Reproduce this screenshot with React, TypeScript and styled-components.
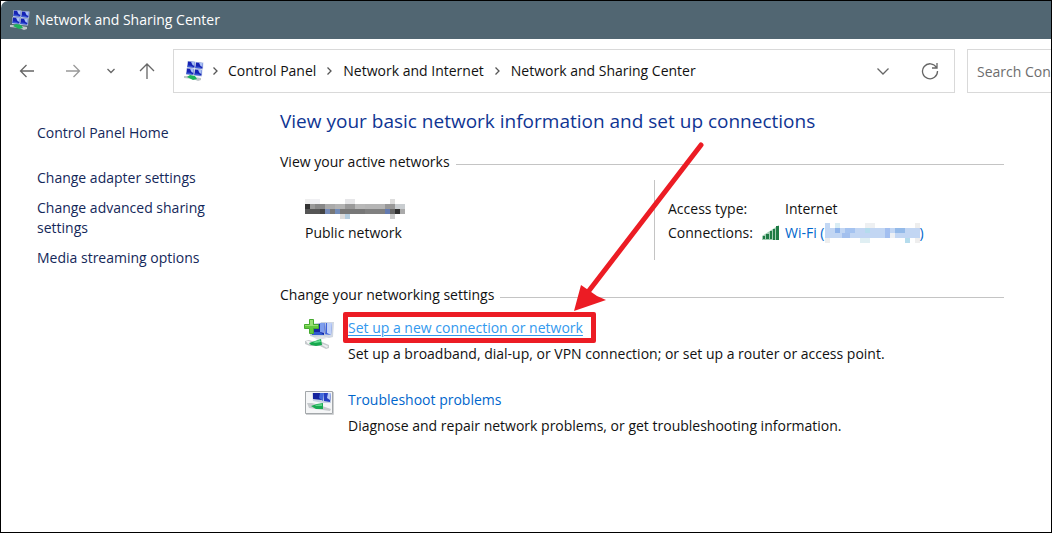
import React from "react";
import styled, { createGlobalStyle } from "styled-components";

const Global = createGlobalStyle`
  *, *::before, *::after { box-sizing: border-box; }
  body { margin: 0; background: #fff; }
  body, button, input { font: 14px/20px "Open Sans", "Noto Sans", sans-serif; }
`;

const Window = styled.div`
  min-height: 100vh;
  border: 1px solid #000;
  background: #fff;
  color: #111;
  overflow: hidden;
`;

const TitleBar = styled.header`
  display: flex;
  align-items: center;
  gap: 5px;
  height: 38px;
  padding-left: 9px;
  background: #516672;
  color: #fff;
  border-top-left-radius: 7px;
`;

const NavBar = styled.div`
  display: flex;
  align-items: center;
  padding: 10px 0 8px 14px;
`;

const NavButtons = styled.div`
  display: flex;
  align-items: center;
  width: 158px;
`;

const IconButton = styled.button<{ $width?: number }>`
  display: flex;
  align-items: center;
  justify-content: center;
  width: ${(p) => p.$width ?? 24}px;
  height: 28px;
  padding: 0;
  border: 0;
  background: none;
`;

const Spacer = styled.span<{ $size: number }>`
  flex: 0 0 ${(p) => p.$size}px;
`;

const AddressBar = styled.nav`
  display: flex;
  align-items: center;
  flex: 1;
  min-width: 0;
  height: 44px;
  padding: 0 12px 0 10px;
  border: 1px solid #d9d9d9;
`;

const Crumb = styled.a`
  color: #111;
  text-decoration: none;
  white-space: nowrap;
`;

const AddressTools = styled.div`
  display: flex;
  gap: 23px;
  margin-left: auto;
`;

const Search = styled.input`
  width: 84px;
  height: 44px;
  margin-left: 12px;
  padding: 0 0 0 9px;
  border: 1px solid #d9d9d9;
  border-right: 0;
  border-radius: 0;
  outline: 0;
  &::placeholder { color: #6d6d6d; opacity: 1; }
`;

const Body = styled.div`
  display: flex;
  padding: 0 47px 0 36px;
`;

const Sidebar = styled.nav`
  display: flex;
  flex-direction: column;
  gap: 10px;
  flex: 0 0 243px;
  padding: 22px 48px 0 0;
`;

const SideLink = styled.a<{ $home?: boolean }>`
  color: #14285a;
  text-decoration: none;
  margin-bottom: ${(p) => (p.$home ? 15 : 0)}px;
`;

const Main = styled.main`
  flex: 1;
  min-width: 0;
`;

const Heading = styled.h1`
  margin: 6px 0 0;
  color: #0f3593;
  font-size: 19px;
  line-height: 28px;
  font-weight: 400;
`;

const SectionTitle = styled.h2`
  display: flex;
  align-items: center;
  gap: 6px;
  margin: 17px 0 0;
  font: inherit;
  &::after {
    content: "";
    flex: 1;
    height: 1px;
    margin-top: 4px;
    background: #c4c4c4;
  }
`;

const ActiveNetwork = styled.div`
  display: grid;
  grid-template-columns: 374px 1fr;
  min-height: 80px;
  margin: 8px 0 25px;
`;

const NetworkName = styled.div`
  display: flex;
  flex-direction: column;
  gap: 4px;
  padding: 19px 0 0 25px;
`;

const NameRow = styled.div`
  display: flex;
  align-items: center;
  height: 20px;
`;

const Details = styled.dl`
  display: grid;
  grid-template-columns: 94px 1fr;
  align-content: start;
  row-gap: 4px;
  margin: 0;
  padding: 19px 0 0 13px;
  border-left: 1px solid #c4c4c4;
`;

const Term = styled.dt`
  margin: 0;
`;

const Value = styled.dd<{ $icon?: boolean }>`
  display: flex;
  align-items: center;
  gap: 5px;
  margin: 0;
  padding-left: ${(p) => (p.$icon ? 0 : 23)}px;
`;

const Link = styled.a<{ $hot?: boolean }>`
  color: ${(p) => (p.$hot ? "#3399ee" : "#0066cc")};
  text-decoration: ${(p) => (p.$hot ? "underline" : "none")};
  text-underline-offset: 2px;
  white-space: nowrap;
`;

const WifiLink = styled(Link)`
  display: flex;
  align-items: center;
`;

const Tasks = styled.ul`
  display: flex;
  flex-direction: column;
  gap: 26px;
  margin: 13px 0 0;
  padding: 0 0 0 24px;
  list-style: none;
`;

const Task = styled.li`
  display: grid;
  grid-template-columns: 44px 1fr;
`;

const TaskText = styled.p`
  margin: 6px 0 0;
`;

const Marked = styled.span`
  position: relative;
  &::before {
    content: "";
    position: absolute;
    inset: -6px -13px -6px -5px;
    border: 5px solid #ec1c24;
    border-radius: 2px;
    pointer-events: none;
  }
`;

const Arrow = styled.svg`
  position: absolute;
  left: 222px;
  top: -178px;
  pointer-events: none;
`;

function Monitor({ x, y }: { x: number; y: number }) {
  return (
    <g transform={`translate(${x} ${y})`}>
      <path d="M.5 0 8.500.5 8 7.500 0 7Z" fill="#c3cfe6" />
      <path d="M1 .5 7.800 1 7.400 6.500 .5 6Z" fill="#1522b4" />
      <path d="M4 .7 7.800 1 7.500 5 5.500 4Z" fill="#a9c0f4" />
      <path d="M.5 4.500 4 4.800 7.400 6.500 .5 6Z" fill="#3a5ad6" />
    </g>
  );
}

function NetworkIcon() {
  return (
    <svg width="20" height="20" viewBox="0 0 20 20" aria-hidden="true">
      <Monitor x={3} y={0} />
      <Monitor x={11} y={1} />
      <Monitor x={2} y={7} />
      <Monitor x={10} y={8} />
      <path d="M0 15 5 15 17 17 17 19 14 20 9 18 0 17Z" fill="#bfc6c8" />
      <path d="m3 16 3-2 5 1 2 3-4 1Z" fill="#1db45b" />
    </svg>
  );
}

function Cable() {
  return (
    <g>
      <path d="M1 23 5 22 11 24 18 24 25 27 25 30 22 31 16 28 6 28 1 26Z" fill="#c6cacd" />
      <path d="M2 23 5 23 9 25 4 26Z" fill="#f5f6f7" />
      <path d="m19 26 5 2-1 2-5-3Z" fill="#eceef0" />
      <path d="m5 25 6-2 6-2 1 6-6 1-5-1Z" fill="#16a94e" />
      <path d="m9 24 7-2 1 2-6 1Z" fill="#66dc92" />
    </g>
  );
}

function NewConnectionIcon() {
  return (
    <svg width="31" height="32" viewBox="0 0 31 32" aria-hidden="true">
      <path d="m17 4 13 0-1 15-4 1-9-2Z" fill="#d0d7e2" />
      <path d="m19 5 9 0-1 12-8-1Z" fill="#3d62da" />
      <path d="m23 5 5 0-1 12-4-2Z" fill="#c0d1f8" />
      <path d="m6 6 16-2-1 14-8 2-7-2Z" fill="#c5cfdd" />
      <path d="m7 7 14-2-1 12-12 0Z" fill="#1424a4" />
      <path d="m16 5 5 0-1 10-4-1Z" fill="#7d9ded" />
      <path d="m8 14 8 0 4 3-12 0Z" fill="#3159cf" />
      <path d="M9 19 19 18 23 20 14 22Z" fill="#dfe2e6" />
      <Cable />
      <path d="M5.500 1.500h4v5h5v4h-5v5h-4v-5h-5v-4h5Z" fill="#62c93e" stroke="#46aa30" />
      <path d="M6 2h3v5h5v1H1V7h5Z" fill="#98df72" />
    </svg>
  );
}

function TroubleshootIcon() {
  return (
    <svg width="31" height="26" viewBox="0 0 31 26" aria-hidden="true">
      <path d="M1.500 1.500h27v22h-27Z" fill="#f5f6f7" stroke="#a3a7aa" />
      <path d="M2 24.500h27.500V2" fill="none" stroke="#cfd1d3" />
      <path d="m8 3 19 0 0 10-8 0-10-2Z" fill="#c8d2e3" />
      <path d="m9 3 10 0-1 7-9-1Z" fill="#14239e" />
      <path d="m16 3 4 0-1 8-4-3Z" fill="#4168da" />
      <path d="m20 3 7 0-1 9-6-1Z" fill="#253fc0" />
      <path d="m24 3 3 0-1 7-3-2Z" fill="#b8caf5" />
      <path d="M3 13 8 13 15 15 27 19 26 21 19 20 5 18Z" fill="#c6cacd" />
      <path d="m7 16 6-2 6-1 0 6-7 0Z" fill="#19ab52" />
      <path d="m11 15 7-1 0 2-6 0Z" fill="#61d68c" />
    </svg>
  );
}

function SignalIcon() {
  return (
    <svg width="18" height="16" viewBox="0 0 18 16" aria-hidden="true">
      <path d="M0 11 17 0v15H0Z" fill="#a4ceb4" />
      <path d="M1 11h2v3H1Zm3-2h3v5H4Zm4-3h2v8H8Zm3-2h2v11h-2Zm3-3h3v14h-3Z" fill="#1e7b45" />
    </svg>
  );
}

type Block = [number, number, number, number, string];

function Mosaic({ width, blocks, label }: { width: number; blocks: Block[]; label: string }) {
  return (
    <svg width={width} height="20" viewBox={`0 0 ${width} 20`} role="img" aria-label={label} shapeRendering="crispEdges">
      {blocks.map(([x, y, w, h, fill], i) => (
        <rect key={i} x={x} y={y} width={w} height={h} fill={fill} />
      ))}
    </svg>
  );
}

const nameBlocks: Block[] = [
  [0, 0, 5, 5, "#eee"], [5, 0, 10, 5, "#f0f0f3"], [40, 0, 10, 5, "#e6e6e8"], [85, 0, 5, 5, "#ddd"],
  [0, 5, 5, 5, "#333"], [5, 5, 5, 5, "#999"], [10, 5, 10, 5, "#888"], [20, 5, 10, 5, "#aaa"], [30, 5, 10, 5, "#b3b3b3"], [40, 5, 10, 5, "#999"], [50, 5, 10, 5, "#b8b8b8"], [60, 5, 20, 5, "#b5b5b5"], [80, 5, 10, 5, "#989898"], [90, 5, 10, 5, "#c9cdd0"],
  [0, 10, 15, 5, "#555"], [15, 10, 5, 5, "#444"], [20, 10, 5, 5, "#768bb8"], [25, 10, 5, 5, "#777"], [30, 10, 5, 5, "#718bb8"], [35, 10, 25, 5, "#777"], [60, 10, 20, 5, "#808080"], [80, 10, 5, 5, "#637aaf"], [85, 10, 5, 5, "#666"], [90, 10, 5, 5, "#303030"], [95, 10, 5, 5, "#aaa"],
  [35, 15, 5, 5, "#ddd"], [40, 15, 5, 5, "#b5cee0"], [85, 15, 5, 5, "#ccc"],
];

const wifiBlocks: Block[] = [
  [0, 0, 5, 5, "#c2d7f4"], [10, 0, 5, 5, "#d9edf5"], [40, 0, 10, 5, "#eef0f2"], [90, 0, 5, 5, "#eee"],
  [0, 5, 95, 10, "#c2d6f3"], [10, 5, 5, 5, "#8fb4eb"], [20, 5, 10, 5, "#a5c3f0"], [40, 5, 5, 5, "#b4dced"], [60, 5, 5, 10, "#a3bff0"], [65, 10, 5, 5, "#edf0f4"], [70, 5, 10, 5, "#94bae9"], [17, 10, 8, 5, "#a3c0ee"],
  [0, 15, 5, 5, "#eee"], [35, 15, 10, 5, "#e0eff3"], [80, 15, 5, 5, "#b5dced"], [90, 15, 5, 5, "#eee"],
];

function Chevron() {
  return (
    <svg width="7" height="10" viewBox="0 0 7 10" fill="none" stroke="#555" strokeWidth="1.3" aria-hidden="true">
      <path d="m1.500 1.500 3.500 3.500-3.500 3.500" />
    </svg>
  );
}

function LineIcon({ d, size, color = "#666" }: { d: string; size: number; color?: string }) {
  return (
    <svg width={size} height={size} viewBox={`0 0 ${size} ${size}`} fill="none" stroke={color} strokeWidth="1.3" aria-hidden="true">
      <path d={d} />
    </svg>
  );
}

export default function App() {
  return (
    <Window>
      <Global />
      <TitleBar>
        <NetworkIcon />
        <span>Network and Sharing Center</span>
      </TitleBar>
      <NavBar>
        <NavButtons>
          <IconButton aria-label="Back"><LineIcon size={16} d="M15 8H1.500M7.500 2 1.500 8l6 6" /></IconButton>
          <Spacer $size={22} />
          <IconButton aria-label="Forward"><LineIcon size={16} color="#999" d="M1 8h13.500M8.500 2l6 6-6 6" /></IconButton>
          <Spacer $size={18} />
          <IconButton $width={16} aria-label="Recent locations"><LineIcon size={10} d="m1.500 3 3.500 3.500L8.500 3" /></IconButton>
          <Spacer $size={16} />
          <IconButton aria-label="Up"><LineIcon size={16} d="M8 16V1M1 8l7-7 7 7" /></IconButton>
        </NavButtons>
        <AddressBar aria-label="Address">
          <NetworkIcon />
          <Spacer $size={8} />
          <Chevron />
          <Spacer $size={9} />
          <Crumb href="#">Control Panel</Crumb>
          <Spacer $size={10} />
          <Chevron />
          <Spacer $size={10} />
          <Crumb href="#">Network and Internet</Crumb>
          <Spacer $size={10} />
          <Chevron />
          <Spacer $size={10} />
          <Crumb href="#">Network and Sharing Center</Crumb>
          <AddressTools>
            <IconButton aria-label="Previous locations"><LineIcon size={14} d="m1.500 4.500 5.500 5.500 5.500-5.500" /></IconButton>
            <IconButton aria-label="Refresh"><LineIcon size={18} d="M15.500 5.500A7.500 7.500 0 1 0 16.500 9M16 1v5h-5" /></IconButton>
          </AddressTools>
        </AddressBar>
        <Search aria-label="Search Control Panel" placeholder="Search Con" />
      </NavBar>
      <Body>
        <Sidebar aria-label="Related settings">
          <SideLink $home href="#">Control Panel Home</SideLink>
          <SideLink href="#">Change adapter settings</SideLink>
          <SideLink href="#">Change advanced sharing settings</SideLink>
          <SideLink href="#">Media streaming options</SideLink>
        </Sidebar>
        <Main>
          <Heading>View your basic network information and set up connections</Heading>
          <SectionTitle>View your active networks</SectionTitle>
          <ActiveNetwork>
            <NetworkName>
              <NameRow><Mosaic width={100} blocks={nameBlocks} label="Hidden network name" /></NameRow>
              <span>Public network</span>
            </NetworkName>
            <Details>
              <Term>Access type:</Term>
              <Value>Internet</Value>
              <Term>Connections:</Term>
              <Value $icon>
                <SignalIcon />
                <WifiLink href="#">Wi-Fi&nbsp;(<Mosaic width={95} blocks={wifiBlocks} label="Hidden connection name" />)</WifiLink>
              </Value>
            </Details>
          </ActiveNetwork>
          <SectionTitle>Change your networking settings</SectionTitle>
          <Tasks>
            <Task>
              <NewConnectionIcon />
              <div>
                <Marked>
                  <Link $hot href="#">Set up a new connection or network</Link>
                  <Arrow width="140" height="176" viewBox="0 0 140 176" aria-hidden="true">
                    <path d="M131 5 18 152" stroke="#ec1c24" strokeWidth="5" strokeLinecap="round" />
                    <path d="m4 171 7-26 16 11 9 4Z" fill="#ec1c24" />
                  </Arrow>
                </Marked>
                <TaskText>Set up a broadband, dial-up, or VPN connection; or set up a router or access point.</TaskText>
              </div>
            </Task>
            <Task>
              <TroubleshootIcon />
              <div>
                <Link href="#">Troubleshoot problems</Link>
                <TaskText>Diagnose and repair network problems, or get troubleshooting information.</TaskText>
              </div>
            </Task>
          </Tasks>
        </Main>
      </Body>
    </Window>
  );
}
